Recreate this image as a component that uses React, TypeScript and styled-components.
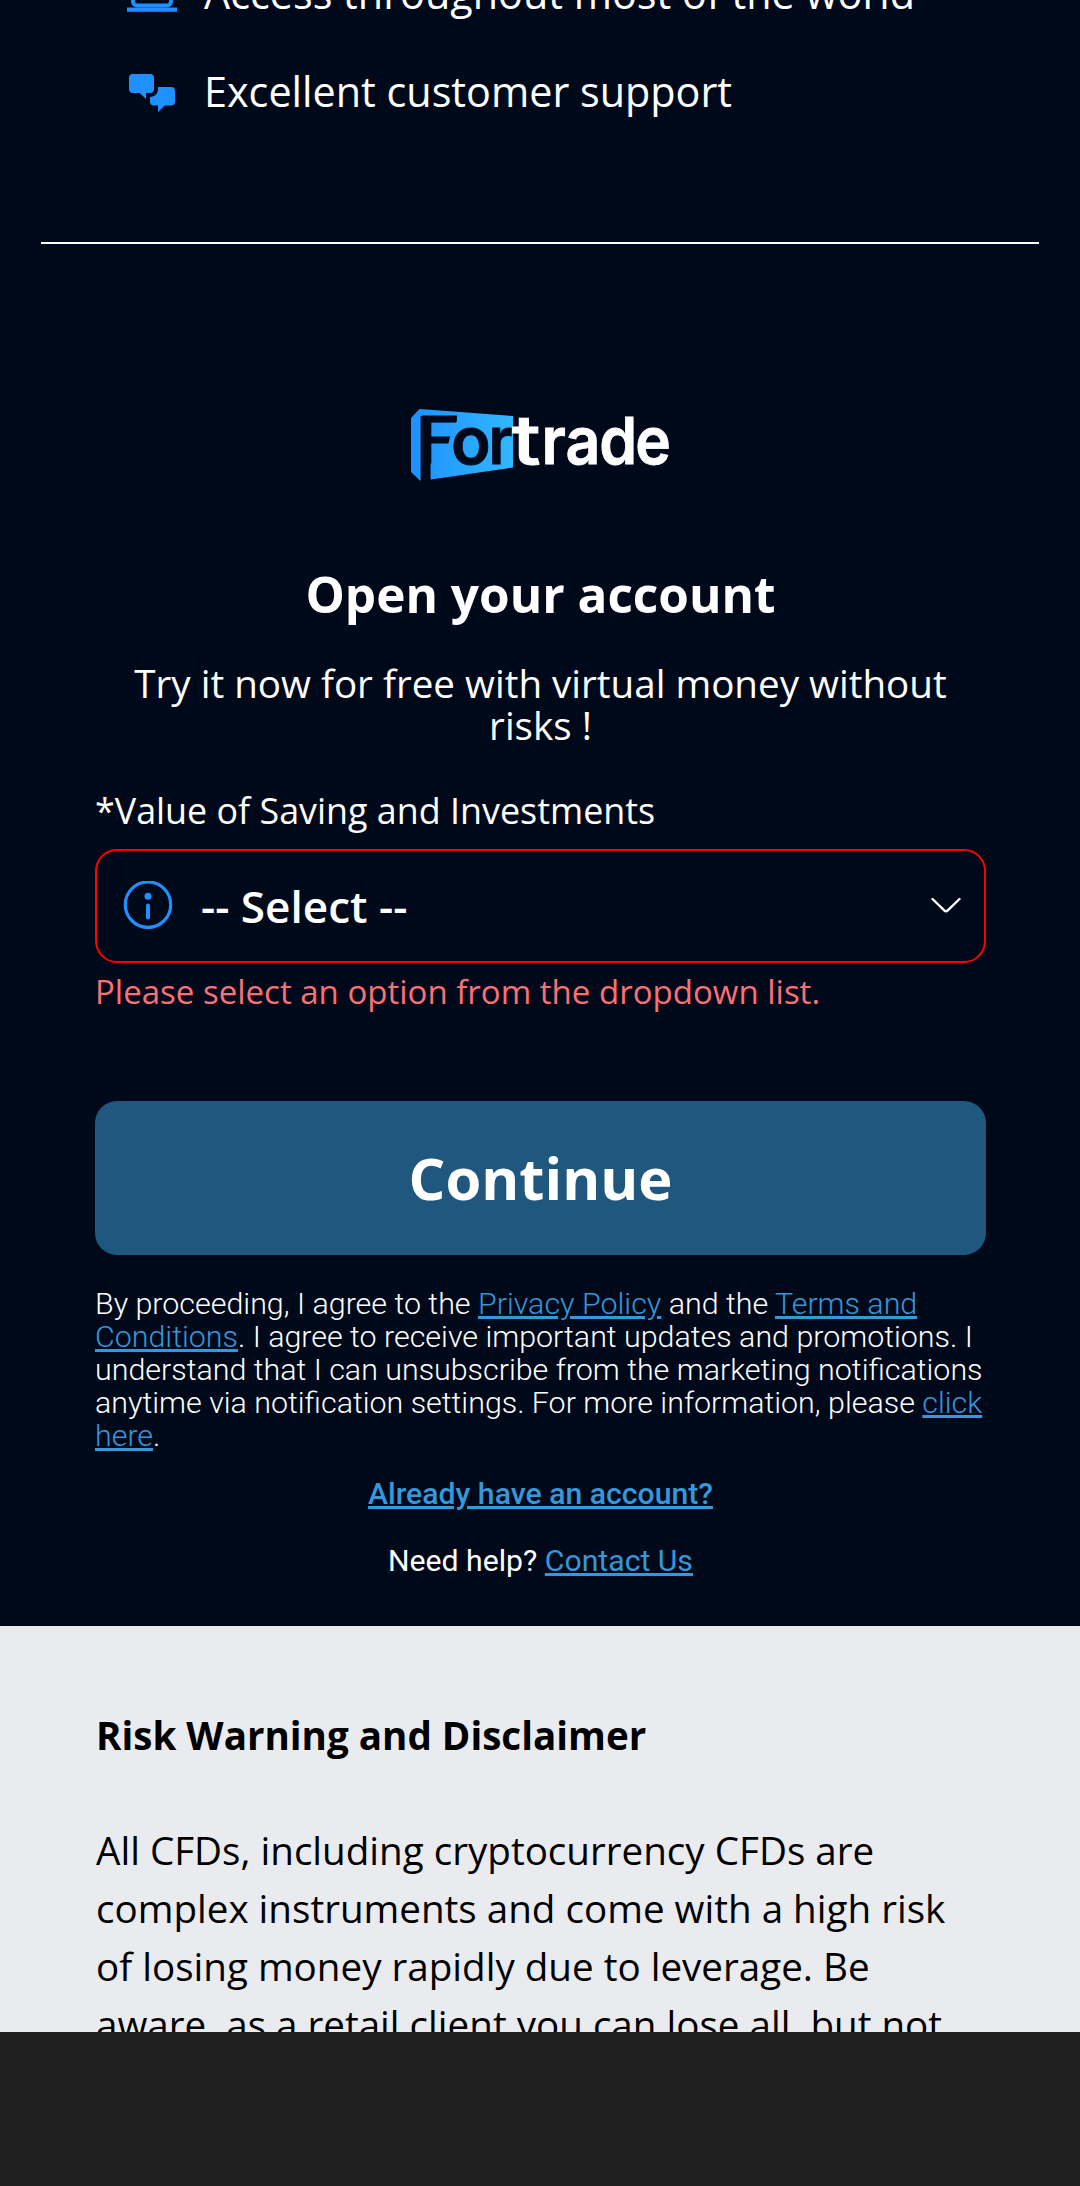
import React from 'react';
import styled, { createGlobalStyle } from 'styled-components';

const GlobalStyle = createGlobalStyle`
  *, *::before, *::after { box-sizing: border-box; }
  html, body { margin: 0; padding: 0; background: #00091a; }
  body { font-family: 'Open Sans', 'Noto Sans', sans-serif; color: #fff; }
`;

const Page = styled.div`
  display: flex;
  flex-direction: column;
  width: 1080px;
  height: 2186px;
  overflow: hidden;
  background: #00091a;
`;

const Main = styled.main`
  display: flex;
  flex-direction: column;
  flex: none;
  height: 1626px;
  overflow: hidden;
`;

const FeatureList = styled.ul`
  display: flex;
  flex-direction: column;
  gap: 42px;
  list-style: none;
  margin: -35px 0 0;
  padding: 0 0 0 127px;
`;

const Feature = styled.li`
  display: flex;
  align-items: center;
  gap: 27px;
  height: 56px;
  font-size: 41.34px;
  line-height: 56px;
  white-space: nowrap;
`;

const Glyph = styled.svg`
  display: block;
  flex: none;
`;

const Divider = styled.hr`
  width: 998px;
  height: 2px;
  margin: 123px auto 0;
  border: 0;
  background: #fff;
`;

const Logo = styled.svg`
  display: block;
  flex: none;
  margin: 164px auto 0;
  font-family: Inter, 'Liberation Sans', sans-serif;
  font-size: 64px;
  font-weight: 600;
`;

const SignUp = styled.form`
  display: flex;
  flex-direction: column;
  width: 891px;
  margin: 82px auto 0 95px;
`;

const Title = styled.h2`
  margin: 0;
  font-size: 49.5px;
  font-weight: 700;
  line-height: 60px;
  text-align: center;
`;

const Subtitle = styled.p`
  margin: 38px 0 0;
  font-size: 38.6px;
  line-height: 42.2px;
  text-align: center;
`;

const Label = styled.label`
  margin-top: 41px;
  font-size: 35.87px;
  line-height: 48px;
`;

const SelectBox = styled.div`
  display: flex;
  align-items: center;
  height: 114px;
  margin-top: 14px;
  padding: 0 23px 0 25px;
  border: 2px solid #f00;
  border-radius: 22px;
`;

const SelectValue = styled.span`
  flex: 1;
  margin-left: 27px;
  font-size: 44.1px;
  font-weight: 600;
  line-height: 60px;
`;

const ErrorText = styled.p`
  margin: 7px 0 0;
  color: #fb6f76;
  font-size: 33.03px;
  line-height: 44px;
`;

const Submit = styled.button`
  height: 154px;
  margin: 87px 0 0;
  padding: 0;
  border: 0;
  border-radius: 22px;
  background: #1f577f;
  color: #fff;
  font-family: inherit;
  font-size: 57.9px;
  font-weight: 700;
  line-height: 80px;
`;

const Terms = styled.p`
  margin: 32px -4px 0 0;
  font-family: Roboto, sans-serif;
  font-size: 30.4px;
  font-weight: 300;
  line-height: 33px;
`;

const Link = styled.a<{ $strong?: boolean }>`
  color: #3498db;
  font-weight: ${(p) => (p.$strong ? 500 : 'inherit')};
  text-decoration: underline;
  text-decoration-thickness: 3px;
  text-underline-offset: 2px;
`;

const HelpRow = styled.p<{ $top: number }>`
  margin: ${(p) => p.$top}px 0 0;
  font-family: Roboto, sans-serif;
  font-size: 30.2px;
  line-height: 36px;
  text-align: center;
`;

const Disclaimer = styled.section`
  flex: none;
  height: 406px;
  padding: 80px 96px 0;
  overflow: hidden;
  background: #eaebef;
  color: #000;
  font-size: 38.6px;
  line-height: 57.9px;
`;

const DisclaimerTitle = styled.h3`
  margin: 0 0 58px;
  font-size: inherit;
  font-weight: 700;
  line-height: 58px;
`;

const DisclaimerText = styled.p`
  margin: 0;
`;

const SystemBar = styled.footer`
  flex: 1;
  background: #202020;
`;

const LaptopIcon = () => (
  <Glyph width="50" height="56" viewBox="0 0 50 56">
    <rect x="6" y="10" width="38" height="30.5" rx="4" fill="none" stroke="#1e90ff" strokeWidth="4" />
    <path d="M0 42.5h50v4.3H0z" fill="#1e90ff" />
  </Glyph>
);

const ChatIcon = () => (
  <Glyph width="50" height="56" viewBox="0 0 50 56" fill="#1e90ff">
    <path d="M6 11h17a4 4 0 0 1 4 4v11a4 4 0 0 1-4 4h-4v6l-6.3-6H6a4 4 0 0 1-4-4V15a4 4 0 0 1 4-4z" />
    <path d="M31 24h13a4 4 0 0 1 4 4v10.500a4 4 0 0 1-4 4h-6L31 49v-6.500h-4a4 4 0 0 1-4-4V34c5-.5 8-3.500 8-8z" />
  </Glyph>
);

const InfoIcon = () => (
  <Glyph width="52" height="50" viewBox="0 0 52 50">
    <circle cx="26" cy="23.700" r="22.700" fill="none" stroke="#1e90ff" strokeWidth="3.200" />
    <circle cx="26" cy="15.200" r="3.500" fill="#1e90ff" />
    <path d="M26 24.500v12" stroke="#1e90ff" strokeWidth="4" strokeLinecap="round" />
  </Glyph>
);

const Chevron = () => (
  <Glyph width="32" height="20" viewBox="0 0 32 20">
    <path
      d="M3.500 3L15.500 14.600Q17 16 18.500 14.600L30.500 3"
      fill="none"
      stroke="#fff"
      strokeWidth="2.400"
      strokeLinecap="round"
    />
  </Glyph>
);

const FortradeLogo = () => (
  <Logo width="260" height="74" viewBox="410 408 260 74">
    <defs>
      <linearGradient id="panel" gradientUnits="userSpaceOnUse" x1="411" x2="513" y1="0" y2="0">
        <stop offset="0" stopColor="#1f90ff" />
        <stop offset="1" stopColor="#30b8ff" />
      </linearGradient>
    </defs>
    {/* panel seen in perspective, split by the long stem of the initial */}
    <path d="M411 418L419.500 409L513 416V467.500L420.500 481L411 472z" fill="url(#panel)" />
    <rect x="420.600" y="416" width="10" height="66" fill="#00091a" />
    <g fill="#00091a" stroke="#00091a" strokeWidth="0.800">
      <text transform="translate(416.400 462.500) scale(1.170 1)" fontWeight="500">F</text>
      {/* slanted ends of the initial's two bars */}
      <path
        d="M459.500 415.500V425H455zM451.300 432H461V446H447.800z"
        fill="url(#panel)"
        stroke="none"
      />
      <text transform="translate(451 463.500) scale(1.020 1.030)">o</text>
      <text transform="translate(488.600 463.500) scale(.94 1.030)">r</text>
    </g>
    <g fill="#fff" stroke="#fff" strokeWidth="0.800">
      <text transform="translate(511.800 463.500) scale(1.330 1.070)" fontWeight="500">t</text>
      <text transform="translate(541.500 463.500) scale(.96 1.030)">r</text>
      <text transform="translate(565.500 463.500) scale(.95 1.030)">a</text>
      <text transform="translate(599.300 463.500) scale(.95 1.010)">d</text>
      <text transform="translate(635.300 463.500) scale(.94 1.030)">e</text>
    </g>
  </Logo>
);

export default function App() {
  return (
    <>
      <GlobalStyle />
      <Page>
        <Main>
          <FeatureList>
            <Feature>
              <LaptopIcon />
              Access throughout most of the world
            </Feature>
            <Feature>
              <ChatIcon />
              Excellent customer support
            </Feature>
          </FeatureList>
          <Divider />
          <FortradeLogo />
          <SignUp>
            <Title>Open your account</Title>
            <Subtitle>Try it now for free with virtual money without risks !</Subtitle>
            <Label>*Value of Saving and Investments</Label>
            <SelectBox>
              <InfoIcon />
              <SelectValue>-- Select --</SelectValue>
              <Chevron />
            </SelectBox>
            <ErrorText>Please select an option from the dropdown list.</ErrorText>
            <Submit type="button">Continue</Submit>
            <Terms>
              By proceeding, I agree to the <Link>Privacy Policy</Link> and the{' '}
              <Link>Terms and Conditions</Link>. I agree to receive important updates and
              promotions. I understand that I can unsubscribe from the marketing notifications
              anytime via notification settings. For more information, please{' '}
              <Link>click here</Link>.
            </Terms>
            <HelpRow $top={24}>
              <Link $strong>Already have an account?</Link>
            </HelpRow>
            <HelpRow $top={31}>
              Need help? <Link>Contact Us</Link>
            </HelpRow>
          </SignUp>
        </Main>
        <Disclaimer>
          <DisclaimerTitle>Risk Warning and Disclaimer</DisclaimerTitle>
          <DisclaimerText>
            All CFDs, including cryptocurrency CFDs are complex instruments and come with a high
            risk of losing money rapidly due to leverage. Be aware, as a retail client you can lose
            all, but not
          </DisclaimerText>
        </Disclaimer>
        <SystemBar />
      </Page>
    </>
  );
}
